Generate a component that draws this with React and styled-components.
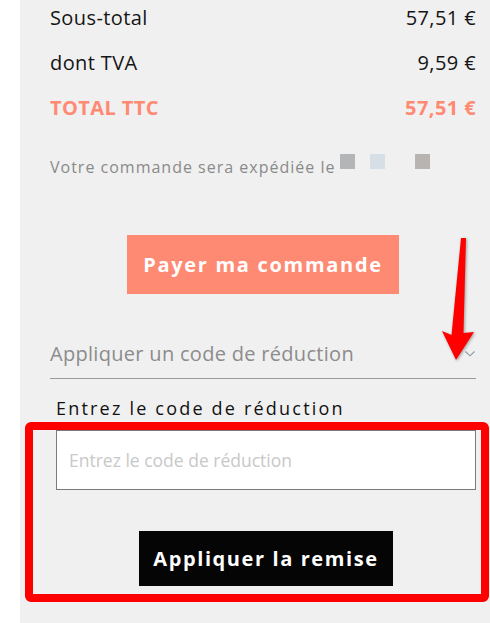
import React from 'react';
import styled, { createGlobalStyle } from 'styled-components';

const Global = createGlobalStyle`
  html, body { margin: 0; padding: 0; background: #ffffff; }
  body { font-family: "Open Sans", "Liberation Sans", sans-serif; }
  *, *::before, *::after { box-sizing: border-box; }
`;

const Page = styled.div`
  position: relative;
  width: 490px;
  height: 623px;
  overflow: hidden;
  padding-left: 20px;
`;

const Panel = styled.div`
  height: 100%;
  background: #f0f0f0;
  padding: 6px 14px 0 30px;
  display: flex;
  flex-direction: column;
`;

const Summary = styled.div`
  display: flex;
  flex-direction: column;
  gap: 21px;
`;

const Row = styled.div`
  display: flex;
  justify-content: space-between;
  font-size: 20px;
  line-height: 24px;
  letter-spacing: 0.4px;
  color: ${(p) => (p.$accent ? '#ff8a73' : '#151515')};
  font-weight: ${(p) => (p.$accent ? 700 : 400)};
`;

const Delivery = styled.p`
  margin: 34px 0 0;
  font-size: 16px;
  line-height: 22px;
  letter-spacing: 1px;
  color: #8a8a8a;
  white-space: nowrap;
`;

const Swatch = styled.span`
  display: inline-block;
  width: 15px;
  height: 15px;
  margin-bottom: 4px;
  margin-left: ${(p) => p.$gap}px;
  background: ${(p) => p.$color};
  vertical-align: baseline;
`;

const PayButton = styled.button`
  align-self: center;
  margin-top: 57px;
  height: 59px;
  padding: 0 16px;
  border: none;
  background: #ff8a73;
  color: #ffffff;
  font-family: inherit;
  font-weight: 700;
  font-size: 20px;
  letter-spacing: 1.7px;
  cursor: pointer;
`;

const AccordionHeader = styled.div`
  margin-top: 48px;
  display: flex;
  justify-content: space-between;
  align-items: center;
  padding-bottom: 12px;
  border-bottom: 1px solid #9a9a9a;
  font-size: 20px;
  line-height: 24px;
  letter-spacing: 0.3px;
  color: #8c8c8c;
`;

const Form = styled.div`
  display: flex;
  flex-direction: column;
  padding-left: 6px;
`;

const Label = styled.label`
  margin-top: 17px;
  font-size: 18px;
  line-height: 24px;
  letter-spacing: 2.2px;
  color: #111111;
`;

const CodeInput = styled.input`
  margin-top: 10px;
  width: 100%;
  height: 60px;
  border: 1px solid #7a7a7a;
  background: #ffffff;
  padding: 0 12px;
  font-family: inherit;
  font-size: 17.5px;
  color: #222;
  outline: none;
  &::placeholder { color: #c8c8c8; }
`;

const ApplyButton = styled.button`
  align-self: center;
  margin-top: 41px;
  height: 55px;
  padding: 0 14px;
  border: none;
  background: #050505;
  color: #ffffff;
  font-family: inherit;
  font-weight: 700;
  font-size: 20px;
  letter-spacing: 1.6px;
  cursor: pointer;
`;

const Highlight = styled.div`
  position: absolute;
  left: 25px;
  top: 422px;
  width: 464px;
  height: 180px;
  border: 8px solid #ff0000;
  border-radius: 6px;
  pointer-events: none;
`;

const ArrowSvg = styled.svg`
  position: absolute;
  left: 430px;
  top: 225px;
  width: 60px;
  height: 160px;
  overflow: visible;
  pointer-events: none;
  filter: drop-shadow(1px 1px 1.5px rgba(0, 0, 0, 0.35));
`;

const Chevron = () => (
  <svg width="11" height="6" viewBox="0 0 11 6" fill="none">
    <path d="M0.5 0.5 L5 4.8 L9.5 0.5" stroke="#8a97a3" strokeWidth="1.1" />
  </svg>
);

export default function App() {
  return (
    <Page>
      <Global />
      <Panel>
        <Summary>
          <Row><span>Sous-total</span><span>57,51 €</span></Row>
          <Row><span>dont TVA</span><span>9,59 €</span></Row>
          <Row $accent><span>TOTAL TTC</span><span>57,51 €</span></Row>
        </Summary>
        <Delivery>
          Votre commande sera expédiée le
          <Swatch $gap={5} $color="#b3b5b7" />
          <Swatch $gap={15} $color="#d5dfe5" />
          <Swatch $gap={30} $color="#b8b4b1" />
        </Delivery>
        <PayButton>Payer ma commande</PayButton>
        <AccordionHeader>
          <span>Appliquer un code de réduction</span>
          <Chevron />
        </AccordionHeader>
        <Form>
          <Label htmlFor="code">Entrez le code de réduction</Label>
          <CodeInput id="code" placeholder="Entrez le code de réduction" />
          <ApplyButton>Appliquer la remise</ApplyButton>
        </Form>
      </Panel>
      <ArrowSvg viewBox="430 225 60 160">
        <polygon
          points="461,238 466,238 463.5,333 474,332 456,360 442,331 451.5,335"
          fill="#ff0000"
        />
      </ArrowSvg>
      <Highlight />
    </Page>
  );
}
